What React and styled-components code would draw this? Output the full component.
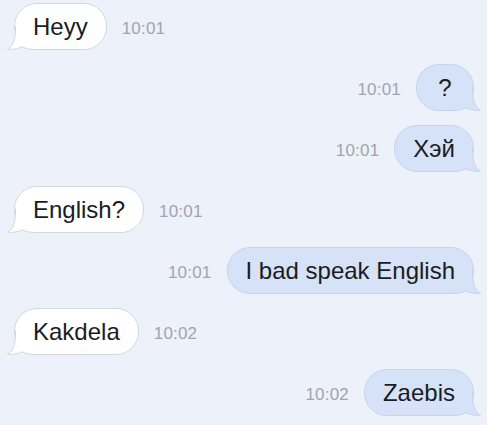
import React from "react";
import styled, { createGlobalStyle } from "styled-components";

const Global = createGlobalStyle`
  html, body {
    margin: 0;
    padding: 0;
    background: #edf1fa;
  }
  body {
    font-family: "Liberation Sans", Arial, sans-serif;
  }
`;

const Thread = styled.div`
  display: flex;
  flex-direction: column;
  gap: 14px;
  padding: 3px 13px 0 14px;
  width: 487px;
  height: 425px;
  box-sizing: border-box;
  overflow: hidden;
`;

const Row = styled.div`
  display: flex;
  align-items: center;
  justify-content: flex-start;
  flex-direction: ${(p) => (p.$out ? "row-reverse" : "row")};
  gap: 15px;
`;

const Bubble = styled.div`
  position: relative;
  box-sizing: border-box;
  height: 47px;
  min-width: 58px;
  padding: 0 18px;
  display: flex;
  align-items: center;
  justify-content: center;
  border-radius: 23px;
  font-size: 24px;
  line-height: 29px;
  color: #1b1c1f;
  white-space: nowrap;
  background: ${(p) => (p.$out ? "#d5e2f7" : "#ffffff")};
  border: 1px solid ${(p) => (p.$out ? "#c6d4ec" : "#d4d7dd")};
`;

const Label = styled.span`
  position: relative;
`;

const Time = styled.span`
  font-size: 17px;
  color: #a0a5ad;
  margin-top: 5px;
  letter-spacing: 0.2px;
`;

const TailSvg = styled.svg`
  position: absolute;
  bottom: -1px;
  ${(p) => (p.$out ? "right: -8px; transform: scaleX(-1);" : "left: -8px;")}
  width: 30px;
  height: 24px;
  overflow: visible;
`;

function Tail({ out }) {
  const fill = out ? "#d5e2f7" : "#ffffff";
  const stroke = out ? "#c6d4ec" : "#d4d7dd";
  const outline =
    "M 8.5 0 L 8.5 2 C 8.5 14 6 20 0.5 23.3 C 6 23.8 11 22.8 15 20.8 C 19 23 24 23.5 30 23.5";
  return (
    <TailSvg $out={out} viewBox="0 0 30 24">
      <path d={outline + " L 30 0 Z"} fill={fill} />
      <path d={outline} fill="none" stroke={stroke} strokeWidth="1" />
    </TailSvg>
  );
}

const messages = [
  { text: "Heyy", time: "10:01", out: false },
  { text: "?", time: "10:01", out: true },
  { text: "Хэй", time: "10:01", out: true },
  { text: "English?", time: "10:01", out: false },
  { text: "I bad speak English", time: "10:01", out: true },
  { text: "Kakdela", time: "10:02", out: false },
  { text: "Zaebis", time: "10:02", out: true },
];

export default function App() {
  return (
    <>
      <Global />
      <Thread>
        {messages.map((m, i) => (
          <Row key={i} $out={m.out}>
            <Bubble $out={m.out}>
              <Tail out={m.out} />
              <Label>{m.text}</Label>
            </Bubble>
            <Time>{m.time}</Time>
          </Row>
        ))}
      </Thread>
    </>
  );
}
